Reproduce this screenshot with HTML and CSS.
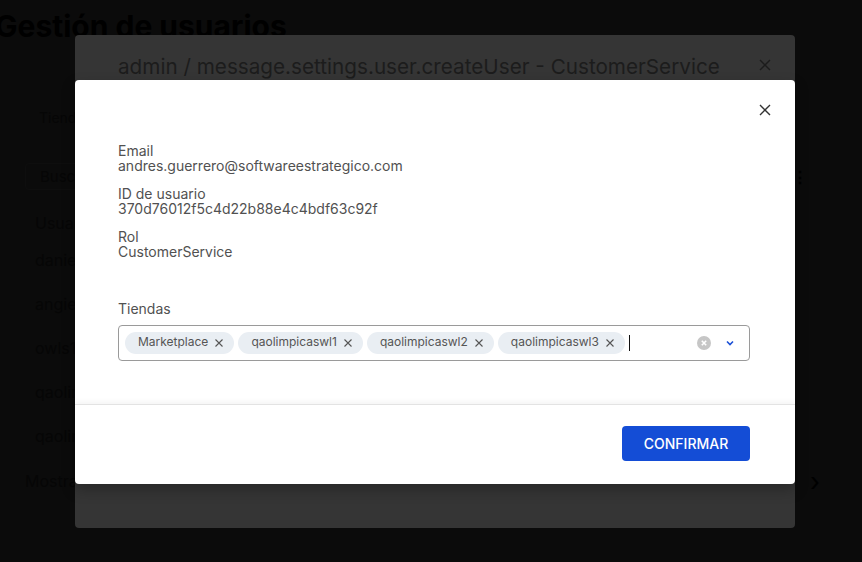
FILE: index.html
```html
<!DOCTYPE html>
<html lang="es">
<head>
<meta charset="utf-8">
<title>Gestión de usuarios</title>
<link rel="stylesheet" href="styles.css">
</head>
<body>
<div class="page">
  <h1 class="page-title">Gestión de usuarios</h1>
  <div class="filter-label">Tiendas</div>
  <div class="search-row">
    <div class="search-box">Buscar</div>
    <div class="kebab">⋮</div>
  </div>
  <div class="table">
    <div class="th">Usuario</div>
    <div class="tr">daniel.rodriguez</div>
    <div class="tr">angie.martinez</div>
    <div class="tr">owls1</div>
    <div class="tr">qaolimpica1</div>
    <div class="tr">qaolimpica2</div>
  </div>
  <div class="pager"><span>Mostrar 5</span><span class="next">›</span></div>
</div>

<div class="dialog dialog-back">
  <div class="back-header">
    <div class="back-title">admin / message.settings.user.createUser - CustomerService</div>
    <div class="back-close">
      <svg width="12" height="12" viewBox="0 0 12 12"><path d="M1 1L11 11M11 1L1 11" stroke="#1c1c1c" stroke-width="1.4" fill="none"/></svg>
    </div>
  </div>
</div>

<div class="dialog dialog-front">
  <div class="front-header">
    <button class="close-btn" aria-label="Cerrar">
      <svg width="12" height="12" viewBox="0 0 12 12"><path d="M1 1L11 11M11 1L1 11" stroke="#333" stroke-width="1.4" fill="none"/></svg>
    </button>
  </div>
  <div class="front-body">
    <div class="field">
      <div class="field-label">Email</div>
      <div class="field-value">andres.guerrero@softwareestrategico.com</div>
    </div>
    <div class="field">
      <div class="field-label">ID de usuario</div>
      <div class="field-value">370d76012f5c4d22b88e4c4bdf63c92f</div>
    </div>
    <div class="field">
      <div class="field-label">Rol</div>
      <div class="field-value">CustomerService</div>
    </div>
    <div class="stores">
      <div class="field-label">Tiendas</div>
      <div class="select">
        <div class="chips">
          <span class="chip">Marketplace<svg class="chip-x" width="10" height="10" viewBox="0 0 10 10"><path d="M1.5 1.5L8.5 8.5M8.5 1.5L1.5 8.5" stroke="#555" stroke-width="1.1" fill="none"/></svg></span>
          <span class="chip">qaolimpicaswl1<svg class="chip-x" width="10" height="10" viewBox="0 0 10 10"><path d="M1.5 1.5L8.5 8.5M8.5 1.5L1.5 8.5" stroke="#555" stroke-width="1.1" fill="none"/></svg></span>
          <span class="chip">qaolimpicaswl2<svg class="chip-x" width="10" height="10" viewBox="0 0 10 10"><path d="M1.5 1.5L8.5 8.5M8.5 1.5L1.5 8.5" stroke="#555" stroke-width="1.1" fill="none"/></svg></span>
          <span class="chip">qaolimpicaswl3<svg class="chip-x" width="10" height="10" viewBox="0 0 10 10"><path d="M1.5 1.5L8.5 8.5M8.5 1.5L1.5 8.5" stroke="#555" stroke-width="1.1" fill="none"/></svg></span>
          <span class="caret"></span>
        </div>
        <div class="select-icons">
          <svg width="14" height="14" viewBox="0 0 14 14"><circle cx="7" cy="7" r="7" fill="#c6c6c6"/><path d="M4.8 4.8L9.2 9.2M9.2 4.8L4.8 9.2" stroke="#fff" stroke-width="1.6" fill="none"/></svg>
          <svg width="10" height="10" viewBox="0 0 10 10"><path d="M2 3.5L5 6.5L8 3.5" stroke="#1a4fd6" stroke-width="1.6" fill="none"/></svg>
        </div>
      </div>
    </div>
  </div>
  <div class="front-footer">
    <button class="confirm">CONFIRMAR</button>
  </div>
</div>
</body>
</html>
```

FILE: styles.css
```css
* { box-sizing: border-box; }
html, body {
  margin: 0;
  padding: 0;
  width: 862px;
  height: 562px;
  overflow: hidden;
  background: #0b0b0b;
  font-family: Inter, "Noto Sans", sans-serif;
}

/* background page (covered by the overlay) */
.page {
  padding: 0 50px 0 25px;
  color: #060606;
}
.page-title {
  margin: 9px 0 0 -30px;
  font-size: 30px;
  line-height: 35px;
  font-weight: 700;
  color: #000;
}
.filter-label {
  margin-top: 64px;
  padding-left: 14px;
  font-size: 14px;
  line-height: 20px;
}
.search-row {
  margin-top: 35px;
  height: 27px;
  display: flex;
  align-items: center;
  justify-content: space-between;
}
.search-box {
  width: 320px;
  height: 27px;
  border: 1px solid #0e0e0e;
  border-radius: 4px;
  padding-left: 14px;
  font-size: 15px;
  line-height: 25px;
}
.kebab {
  font-size: 16px;
  font-weight: 700;
  margin-right: 4px;
  color: #000;
}
.table {
  margin-top: 18px;
  padding-left: 10px;
  font-size: 16px;
}
.th {
  height: 30px;
  line-height: 30px;
}
.tr {
  height: 44px;
  line-height: 44px;
}
.pager {
  margin-top: 8px;
  height: 30px;
  display: flex;
  align-items: center;
  justify-content: space-between;
  font-size: 16px;
}
.next {
  font-size: 26px;
  margin-right: -8px;
  color: #000;
}

/* dialogs */
.dialog {
  position: absolute;
  left: 75px;
  width: 720px;
  border-radius: 4px;
}
.dialog-back {
  top: 35px;
  height: 493px;
  background: #353535;
}
.back-header {
  height: 60px;
  padding: 20px 20px 0 43px;
  display: flex;
  justify-content: space-between;
  align-items: flex-start;
}
.back-title {
  font-size: 20.7px;
  line-height: 24px;
  color: #1c1c1c;
}
.back-close {
  width: 20px;
  height: 20px;
  display: flex;
  align-items: center;
  justify-content: center;
}

.dialog-front {
  top: 80px;
  height: 404px;
  background: #fff;
  display: flex;
  flex-direction: column;
  box-shadow: 0 6px 14px rgba(0, 0, 0, 0.25);
}
.front-header {
  height: 50px;
  padding: 20px 20px 0 0;
  display: flex;
  justify-content: flex-end;
}
.close-btn {
  width: 20px;
  height: 20px;
  padding: 0;
  border: 0;
  background: transparent;
  display: flex;
  align-items: center;
  justify-content: center;
}
.front-body {
  flex: 1;
  padding: 14px 45px 0 43px;
  color: #515151;
  font-size: 14px;
  line-height: 14.5px;
}
.field {
  margin-bottom: 14px;
}
.stores {
  margin-top: 43px;
}
.stores .field-label {
  margin-bottom: 8px;
}
.select {
  height: 36px;
  border: 1px solid #9a9a9a;
  border-radius: 4px;
  padding: 0 14px 0 6px;
  display: flex;
  align-items: center;
  justify-content: space-between;
}
.chips {
  display: flex;
  align-items: center;
  gap: 4px;
}
.chip {
  height: 22px;
  border-radius: 11px;
  background: #e9eef3;
  padding: 0 10px 0 13px;
  display: inline-flex;
  align-items: center;
  gap: 6px;
  font-size: 12px;
  color: #555;
}
.caret {
  width: 1px;
  height: 16px;
  background: #111;
  margin-left: 0;
}
.select-icons {
  display: flex;
  align-items: center;
  gap: 14px;
}
.front-footer {
  height: 80px;
  border-top: 1px solid #e3e3e3;
  box-shadow: 0 -3px 5px rgba(0, 0, 0, 0.04);
  padding: 21px 45px 0 0;
  display: flex;
  justify-content: flex-end;
  align-items: flex-start;
}
.confirm {
  width: 128px;
  height: 35px;
  border: 0;
  border-radius: 4px;
  background: #144dd6;
  color: #fff;
  font-family: Inter, "Noto Sans", sans-serif;
  font-size: 14px;
  font-weight: 500;
}
```
